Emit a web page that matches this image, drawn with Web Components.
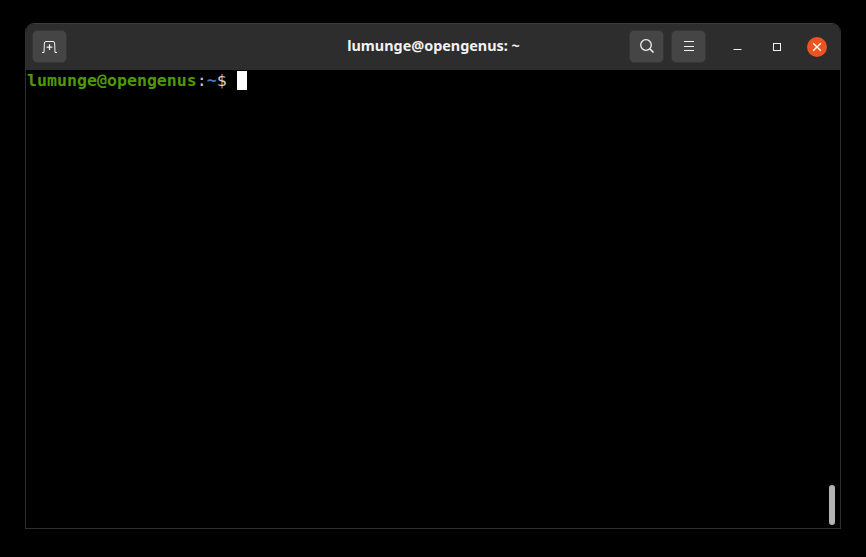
<!DOCTYPE html>
<html><head><meta charset="utf-8"><style>
html,body{margin:0;padding:0;background:#000;height:100%;overflow:hidden}
body{display:flex;padding:23px 25px 28px;box-sizing:border-box;height:557px}
</style></head><body>
<term-window></term-window>
<template id="tw"><style>
:host{display:flex;flex-direction:column;width:816px;height:506px;box-sizing:border-box;border:1px solid #2f2f2f;border-top-color:#3c3c3c;border-radius:9px 9px 0 0;background:#000;overflow:hidden;position:relative}
.sb{position:absolute;right:5px;bottom:3px;width:6px;height:40px;border-radius:3px;background:#b3b3b3}
</style><title-bar></title-bar><term-body></term-body><div class="sb"></div></template>

<template id="tb"><style>
:host{display:grid;grid-template-columns:1fr auto 1fr;align-items:center;height:46px;flex:none;background:#2d2d2d;box-sizing:border-box;padding:0 13px 1px 6px;color:#fff}
.title{text-align:center;font:700 14.4px "Noto Sans",sans-serif;color:#f2f2f2;white-space:nowrap;margin:0 0 3px 8px}
.right{display:flex;justify-content:flex-end;align-items:center}
.group{display:flex;gap:7px;align-items:center}
.ctl{display:flex;align-items:center;margin-left:21px}
.ctl span{display:flex;align-items:center;justify-content:center;width:20px;height:20px}
.ctl span+span{margin-left:20px}
.close{background:#e95420;border-radius:50%}
</style>
<tool-btn><svg width="15" height="13" viewBox="0 0 15 13" fill="none" stroke="#f2f2f2" stroke-width="1"><path d="M0 12.5H2L2.4 3Q2.5 1.5 4 1.5H11Q12.5 1.5 12.6 3L13 12.5H15"/><path d="M7.5 4.2V10M4.6 7.1H10.4" stroke-width="1.2"/></svg></tool-btn>
<div class="title">lumunge@opengenus: ~</div>
<div class="right">
<div class="group">
<tool-btn><svg width="16" height="17" viewBox="0 0 16 17" fill="none" stroke="#f2f2f2" stroke-width="1.3"><circle cx="7" cy="7" r="5.3"/><path d="M11 11L14.5 14.5" stroke-width="1.6"/></svg></tool-btn>
<tool-btn><svg width="12" height="13" viewBox="0 0 12 13" fill="none" stroke="#f2f2f2" stroke-width="1"><path d="M1 1.5H11M1 6.5H11M1 10.5H11"/></svg></tool-btn>
</div>
<div class="ctl">
<span><svg width="10" height="10" viewBox="0 0 10 10"><path d="M1.5 7.5H9.5" stroke="#f2f2f2" stroke-width="1" fill="none"/></svg></span>
<span><svg width="10" height="10" viewBox="0 0 10 10"><rect x="1.5" y="1.5" width="7" height="7" stroke="#f2f2f2" stroke-width="1" fill="none"/></svg></span>
<span class="close"><svg width="10" height="10" viewBox="0 0 10 10"><path d="M1.2 1.2L8.8 8.8M8.8 1.2L1.2 8.8" stroke="#fff" stroke-width="1.4" fill="none"/></svg></span>
</div>
</div></template>

<template id="btn"><style>
:host{display:flex;align-items:center;justify-content:center;width:35px;height:33px;box-sizing:border-box;background:#454545;border:1px solid #363636;border-radius:5px}
</style><slot></slot></template>

<template id="body"><style>
:host{display:block;flex:1;background:#000;padding:1px 1px;font:16.6px/19px "DejaVu Sans Mono",monospace;white-space:pre;color:#fff}
.u{color:#4e9a06;font-weight:700}
.c{display:inline-block;width:10px;height:19px;background:#fff;vertical-align:top}
.p{color:#d0cfcc}.t{color:#3f7ebd;font-weight:700}
</style><div><span class="u">lumunge@opengenus</span><span class="p">:</span><span class="t">~</span><span class="p">$ </span><span class="c"></span></div></template>

<script>
for (const [n,t] of [['term-window','tw'],['title-bar','tb'],['tool-btn','btn'],['term-body','body']]) {
  customElements.define(n, class extends HTMLElement {
    constructor(){super();this.attachShadow({mode:'open'}).append(document.getElementById(t).content.cloneNode(true));}
  });
}
</script>
</body></html>
